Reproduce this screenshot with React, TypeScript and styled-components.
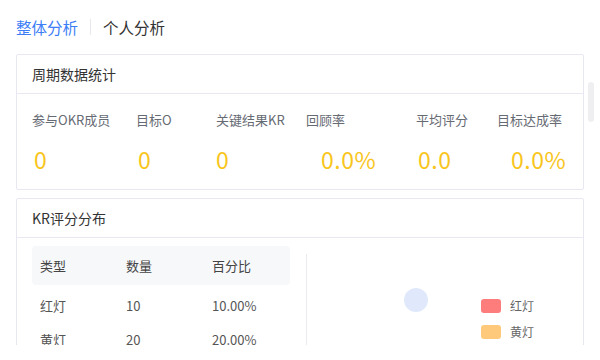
import React from "react";
import styled, { createGlobalStyle } from "styled-components";

const GlobalStyle = createGlobalStyle`
    html, body {
        margin: 0;
        padding: 0;
        background: #fff;
        overflow: hidden;
    }
    body {
        font-family: "Noto Sans CJK SC", "Noto Sans", sans-serif;
        color: #333;
    }
`;

const Page = styled.div`
    position: relative;
    width: 600px;
    height: 345px;
    overflow: hidden;
    box-sizing: border-box;
    padding: 14px 16px 0 16px;
    display: flex;
    flex-direction: column;
    gap: 8px;
`;

const ScrollThumb = styled.div`
    position: absolute;
    top: 82px;
    right: 6px;
    width: 6px;
    height: 40px;
    border-radius: 3px;
    background: #efeff1;
`;

const Tabs = styled.div`
    display: flex;
    align-items: center;
    height: 26px;
    margin-bottom: 6px;
    flex-shrink: 0;
`;

const Tab = styled.div<{ active?: boolean }>`
    font-size: 15.5px;
    line-height: 26px;
    color: ${(p) => (p.active ? "#3d7ef6" : "#333")};
`;

const TabDivider = styled.div`
    width: 1px;
    height: 16px;
    background: #e6e8ee;
    margin: 0 12px;
`;

const Card = styled.div`
    flex-shrink: 0;
    border: 1px solid #e8e9f0;
    border-radius: 2px;
    background: #fff;
`;

const CardHeader = styled.div`
    height: 38px;
    border-bottom: 1px solid #e8e9f0;
    display: flex;
    align-items: center;
    padding: 0 15px;
    font-size: 14px;
    color: #333;
`;

const StatGrid = styled.div`
    display: grid;
    grid-template-columns: 104px 80px 90px 110px 81px 70px;
    padding: 15px 15px 0 15px;
    height: 80px;
`;

const Stat = styled.div`
    display: flex;
    flex-direction: column;
`;

const StatLabel = styled.div`
    font-size: 13px;
    line-height: 22px;
    color: #666a73;
    white-space: nowrap;
`;

const StatValue = styled.div<{ indent?: number }>`
    margin-top: 14px;
    padding-left: ${(p) => p.indent ?? 2}px;
    font-size: 23px;
    line-height: 28px;
    color: #f8c51c;
    letter-spacing: 0.5px;
`;

const DistBody = styled.div`
    display: flex;
    padding: 8px 15px 0 15px;
    height: 160px;
`;

const Table = styled.div`
    width: 258px;
    display: flex;
    flex-direction: column;
`;

const Row = styled.div<{ head?: boolean }>`
    flex-shrink: 0;
    display: grid;
    grid-template-columns: 86px 86px 86px;
    height: ${(p) => (p.head ? 39 : 34)}px;
    align-items: center;
    padding-left: 8px;
    margin-bottom: ${(p) => (p.head ? 3 : 0)}px;
    background: ${(p) => (p.head ? "#f7f8fa" : "transparent")};
    border-radius: 4px;
    font-size: 13px;
    color: ${(p) => (p.head ? "#444" : "#555")};
`;

const ChartArea = styled.div`
    flex: 1;
    margin-left: 16px;
    margin-top: 8px;
    border-left: 1px solid #ececf0;
    display: flex;
    align-items: flex-start;
    padding-top: 33px;
`;

const Pie = styled.svg`
    margin-left: 96px;
`;

const Legend = styled.div`
    display: flex;
    flex-direction: column;
    gap: 12px;
    margin-left: 52px;
    margin-top: 12px;
`;

const LegendItem = styled.div`
    display: flex;
    align-items: center;
    gap: 9px;
    font-size: 12px;
    color: #666;
    line-height: 14px;
`;

const Swatch = styled.span<{ color: string }>`
    width: 20px;
    height: 14px;
    border-radius: 3px;
    background: ${(p) => p.color};
`;

const stats = [
    { label: "参与OKR成员", value: "0" },
    { label: "目标O", value: "0" },
    { label: "关键结果KR", value: "0", indent: 0 },
    { label: "回顾率", value: "0.0%", indent: 15 },
    { label: "平均评分", value: "0.0" },
    { label: "目标达成率", value: "0.0%", indent: 14 },
];

const rows = [
    { type: "红灯", count: "10", pct: "10.00%" },
    { type: "黄灯", count: "20", pct: "20.00%" },
    { type: "绿灯", count: "70", pct: "70.00%" },
];

export default function App() {
    return (
        <>
            <GlobalStyle />
            <Page>
                <Tabs>
                    <Tab active>整体分析</Tab>
                    <TabDivider />
                    <Tab>个人分析</Tab>
                </Tabs>

                <Card>
                    <CardHeader>周期数据统计</CardHeader>
                    <StatGrid>
                        {stats.map((s) => (
                            <Stat key={s.label}>
                                <StatLabel>{s.label}</StatLabel>
                                <StatValue indent={s.indent}>{s.value}</StatValue>
                            </Stat>
                        ))}
                    </StatGrid>
                </Card>

                <Card>
                    <CardHeader>KR评分分布</CardHeader>
                    <DistBody>
                        <Table>
                            <Row head>
                                <span>类型</span>
                                <span>数量</span>
                                <span>百分比</span>
                            </Row>
                            {rows.map((r) => (
                                <Row key={r.type}>
                                    <span>{r.type}</span>
                                    <span>{r.count}</span>
                                    <span>{r.pct}</span>
                                </Row>
                            ))}
                        </Table>
                        <ChartArea>
                            <Pie width="26" height="26" viewBox="0 0 26 26">
                                <circle cx="13" cy="13" r="12" fill="#dfe9fb" />
                            </Pie>
                            <Legend>
                                <LegendItem>
                                    <Swatch color="#fd7c7c" />
                                    红灯
                                </LegendItem>
                                <LegendItem>
                                    <Swatch color="#fec97b" />
                                    黄灯
                                </LegendItem>
                            </Legend>
                        </ChartArea>
                    </DistBody>
                </Card>

                <ScrollThumb />
            </Page>
        </>
    );
}
